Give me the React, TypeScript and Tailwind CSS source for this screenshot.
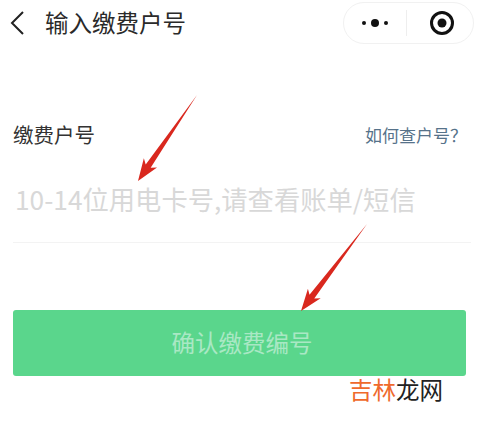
const cjk = "font-['Noto_Sans_CJK_SC','Noto_Sans',sans-serif]";

function Arrow({ x1, y1, x2, y2 }: { x1: number; y1: number; x2: number; y2: number }) {
  const dx = x2 - x1;
  const dy = y2 - y1;
  const len = Math.hypot(dx, dy);
  const ux = dx / len;
  const uy = dy / len;
  const nx = -uy;
  const ny = ux;
  const p = (along: number, side: number) =>
    `${x1 + ux * along + nx * side},${y1 + uy * along + ny * side}`;
  const points = [
    p(0, 0),
    p(len - 18, 3),
    p(len - 22, 8),
    p(len, 0),
    p(len - 22, -8),
    p(len - 18, -3),
  ].join(" ");
  return <polygon points={points} fill="#d9281e" />;
}

export default function App() {
  return (
    <div className={`relative w-[484px] h-[425px] overflow-hidden bg-white ${cjk}`}>
      <header className="flex items-center h-[46px] pl-[9px] pr-[10px]">
        <svg width="16" height="26" viewBox="0 0 16 26" fill="none" stroke="#222" strokeWidth="2">
          <path d="M14 2 L3 13 L14 24" />
        </svg>
        <h1 className="ml-[20px] text-[23.5px] leading-none font-normal text-[#2a2a2a]">输入缴费户号</h1>
        <div className="ml-auto flex items-center w-[131px] h-[42px] rounded-full border border-[#f1f1f1]">
          <div className="flex-1 flex items-center justify-center gap-[5px]">
            <span className="w-[4px] h-[4px] rounded-full bg-[#111]" />
            <span className="w-[8px] h-[8px] rounded-full bg-[#111]" />
            <span className="w-[4px] h-[4px] rounded-full bg-[#111]" />
          </div>
          <div className="w-px h-[26px] bg-[#eeeeee]" />
          <div className="flex-1 flex items-center justify-center pl-[5px]">
            <svg width="26" height="26" viewBox="0 0 26 26">
              <circle cx="13" cy="13" r="10.5" fill="none" stroke="#111" strokeWidth="3" />
              <circle cx="13" cy="13" r="4.5" fill="#111" />
            </svg>
          </div>
        </div>
      </header>

      <main className="px-[13px] pt-[74px]">
        <div className="flex items-center justify-between h-[28px] pr-[4px]">
          <span className="text-[20.5px] leading-none text-[#333333]">缴费户号</span>
          <span className="text-[17px] leading-none text-[#56728a]">如何查户号？</span>
        </div>
        <div className="flex items-center h-[95px] pl-[2px] pt-[8px] border-b border-[#f3f3f3] text-[26.3px] leading-none text-[#d8d8d8] whitespace-nowrap">
          10-14位用电卡号,请查看账单/短信
        </div>
        <button className="mt-[67px] flex items-center justify-center w-[453px] h-[66px] pl-[5px] rounded-[3px] bg-[#5ad68c] text-[23.5px] leading-none text-[#a9e8c4]">
          确认缴费编号
        </button>
      </main>

      <svg className="absolute inset-0 pointer-events-none" width="484" height="425">
        <Arrow x1={197} y1={95} x2={138} y2={181} />
        <Arrow x1={367} y1={224} x2={301} y2={311} />
      </svg>

      <div className="absolute left-[349px] top-[374px] text-[23.5px] leading-[30px] whitespace-nowrap">
        <span className="text-[#ef6a2c]">吉林</span>
        <span className="text-[#222222]">龙网</span>
      </div>
    </div>
  );
}
